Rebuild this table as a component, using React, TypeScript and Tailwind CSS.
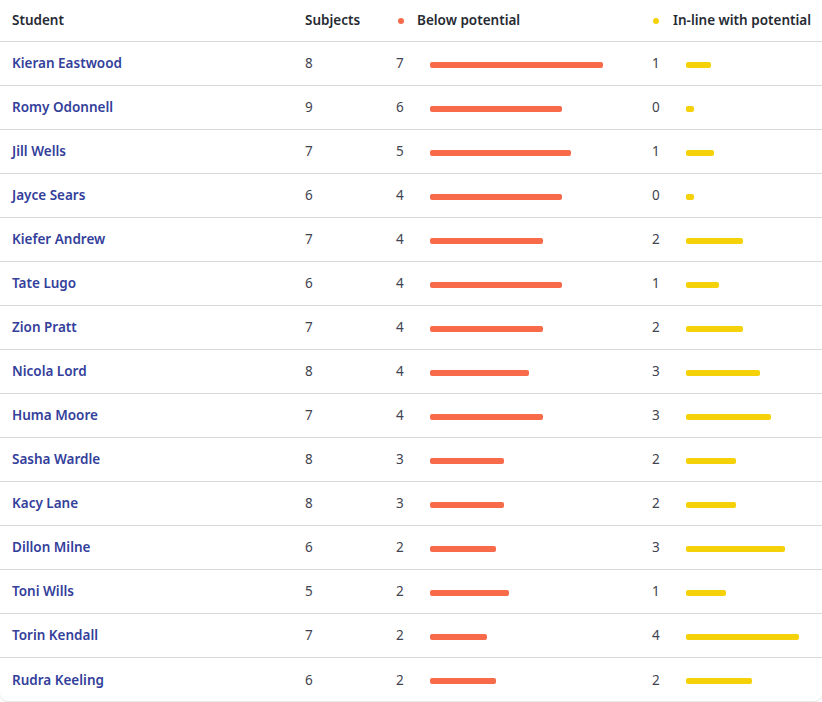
const ROWS: Array<{ name: string; subjects: number; below: number; inline: number }> = [
  { name: "Kieran Eastwood", subjects: 8, below: 7, inline: 1 },
  { name: "Romy Odonnell", subjects: 9, below: 6, inline: 0 },
  { name: "Jill Wells", subjects: 7, below: 5, inline: 1 },
  { name: "Jayce Sears", subjects: 6, below: 4, inline: 0 },
  { name: "Kiefer Andrew", subjects: 7, below: 4, inline: 2 },
  { name: "Tate Lugo", subjects: 6, below: 4, inline: 1 },
  { name: "Zion Pratt", subjects: 7, below: 4, inline: 2 },
  { name: "Nicola Lord", subjects: 8, below: 4, inline: 3 },
  { name: "Huma Moore", subjects: 7, below: 4, inline: 3 },
  { name: "Sasha Wardle", subjects: 8, below: 3, inline: 2 },
  { name: "Kacy Lane", subjects: 8, below: 3, inline: 2 },
  { name: "Dillon Milne", subjects: 6, below: 2, inline: 3 },
  { name: "Toni Wills", subjects: 5, below: 2, inline: 1 },
  { name: "Torin Kendall", subjects: 7, below: 2, inline: 4 },
  { name: "Rudra Keeling", subjects: 6, below: 2, inline: 2 },
];

const BAR_MAX = 198;

function barWidth(count: number, subjects: number) {
  // zero still shows a small stub
  return Math.max(8, Math.round((count / subjects) * BAR_MAX));
}

function BarCell({ count, subjects, color }: { count: number; subjects: number; color: string }) {
  return (
    <div className="flex items-center">
      <span className="w-[34px] text-[#3f4450]">{count}</span>
      <span className={`mt-[2px] h-[6px] rounded-[2px] ${color}`} style={{ width: barWidth(count, subjects) }} />
    </div>
  );
}

export default function App() {
  return (
    <div className="min-h-screen bg-white font-['Noto_Sans',sans-serif] text-[13.5px]">
      <div className="h-[701px] w-full overflow-hidden rounded-b-lg bg-white shadow-[0_1px_2px_rgba(0,0,0,0.12)]">
        <div className="grid h-[42px] grid-cols-[293px_91px_256px_1fr] items-center border-b border-[#d9d9d9] pl-3 font-semibold text-[#262a33]">
          <span>Student</span>
          <span>Subjects</span>
          <span className="flex items-center">
            <span className="ml-[2px] mr-[13px] mt-[1px] h-[6px] w-[6px] rounded-full bg-[#f76b4b]" />
            Below potential
          </span>
          <span className="flex items-center">
            <span className="ml-[1px] mr-[14px] mt-[1px] h-[6px] w-[6px] rounded-full bg-[#f5d10a]" />
            In-line with potential
          </span>
        </div>
        {ROWS.map((row, i) => (
          <div
            key={row.name}
            className={`grid h-[44px] grid-cols-[293px_91px_256px_1fr] items-center pl-3 ${
              i < ROWS.length - 1 ? "border-b border-[#d9d9d9]" : ""
            }`}
          >
            <span className="font-semibold text-[#33409a]">{row.name}</span>
            <span className="text-[#3f4450]">{row.subjects}</span>
            <BarCell count={row.below} subjects={row.subjects} color="bg-[#f76b4b]" />
            <BarCell count={row.inline} subjects={row.subjects} color="bg-[#f5d10a]" />
          </div>
        ))}
      </div>
    </div>
  );
}
